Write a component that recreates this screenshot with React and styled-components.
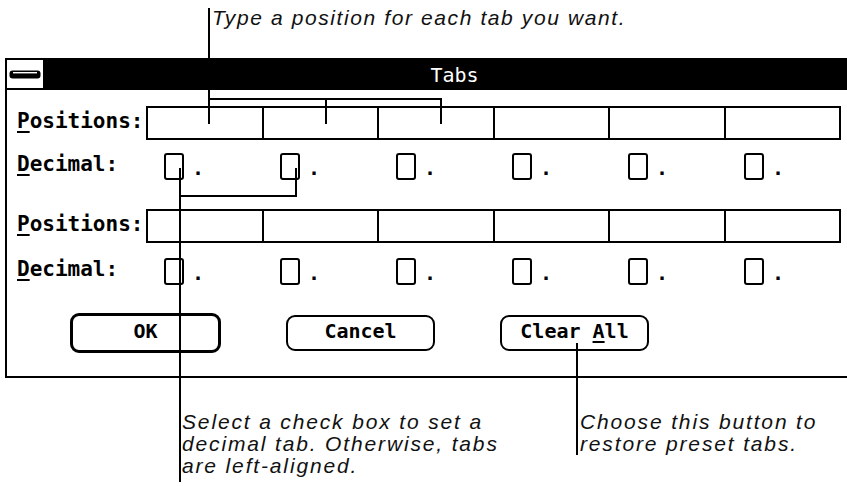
import React from "react";
import styled, { createGlobalStyle } from "styled-components";

const GlobalStyle = createGlobalStyle`
  html, body {
    margin: 0;
    padding: 0;
    background: #fff;
  }
`;

const Page = styled.div`
  position: relative;
  width: 847px;
  height: 486px;
  overflow: hidden;
  background: #fff;
  color: #000;
`;

const Note = styled.div`
  font-family: "Liberation Sans", Arial, sans-serif;
  font-style: italic;
  font-size: 21px;
  line-height: 22px;
  letter-spacing: 1.85px;
  color: #111;
`;

const TopNote = styled(Note)`
  height: 58px;
  box-sizing: border-box;
  padding: 7px 0 0 212px;
  letter-spacing: 1.6px;
`;

const Dialog = styled.div`
  margin-left: 5px;
  width: 857px;
  border: 2px solid #000;
  font-family: "DejaVu Sans Mono", "Liberation Mono", monospace;
  font-weight: bold;
  font-size: 20px;
`;

const TitleBar = styled.div`
  display: flex;
  height: 28px;
  border-bottom: 2px solid #000;
`;

const SysMenu = styled.div`
  width: 36px;
  border-right: 2px solid #000;
  display: flex;
  align-items: center;
  justify-content: center;
  background: #fff;
`;

const Caption = styled.div`
  flex: 1;
  background: #000;
  color: #fff;
  font-weight: normal;
  display: flex;
  align-items: center;
  justify-content: center;
  line-height: 1;
  padding-top: 2px;
`;

const Body = styled.div`
  padding: 16px 0 23px 10px;
  display: flex;
  flex-direction: column;
`;

const Row = styled.div`
  display: flex;
  align-items: center;
  margin-top: ${(p) => p.$gap || 0}px;
  height: ${(p) => p.$h}px;
`;

const Label = styled.div`
  width: 129px;
  flex-shrink: 0;
  font-size: 21px;
  line-height: 1;
  margin-top: -4px;
`;

const Key = styled.span`
  text-decoration: underline;
  text-decoration-thickness: 2px;
  text-underline-offset: 3px;
`;

const Strip = styled.div`
  display: flex;
  width: 695px;
  height: 34px;
  box-sizing: border-box;
  border: 2px solid #000;
`;

const Cell = styled.div`
  flex: 1;
  & + & {
    border-left: 2px solid #000;
  }
`;

const BoxCell = styled.div`
  width: 116px;
  flex-shrink: 0;
  height: 100%;
  display: flex;
  align-items: flex-end;
  padding-left: 18px;
  box-sizing: border-box;
`;

const Check = styled.div`
  width: 20px;
  height: 27px;
  flex-shrink: 0;
  box-sizing: border-box;
  border: 2px solid #000;
  border-radius: 3px;
`;

const Point = styled.span`
  margin-left: 8px;
  line-height: 20px;
  height: 20px;
  margin-bottom: 2px;
`;

const Buttons = styled.div`
  display: flex;
  align-items: center;
  gap: 65px;
  margin: 28px 0 0 53px;
  height: 40px;
`;

const Button = styled.div`
  width: ${(p) => (p.$default ? 151 : 149)}px;
  height: ${(p) => (p.$default ? 40 : 36)}px;
  box-sizing: border-box;
  border: ${(p) => (p.$default ? 3 : 2)}px solid #000;
  border-radius: 9px;
  display: flex;
  align-items: center;
  justify-content: center;
  line-height: 1;
  padding-bottom: 4px;
`;

const Notes = styled.div`
  display: grid;
  grid-template-columns: 398px auto;
  padding: 33px 0 0 182px;
`;

const Leaders = styled.svg`
  position: absolute;
  left: 0;
  top: 0;
  pointer-events: none;
`;

const FieldRow = () => (
  <Strip>
    {[0, 1, 2, 3, 4, 5].map((i) => (
      <Cell key={i} />
    ))}
  </Strip>
);

const DecimalRow = () => (
  <>
    {[0, 1, 2, 3, 4, 5].map((i) => (
      <BoxCell key={i}>
        <Check />
        <Point>.</Point>
      </BoxCell>
    ))}
  </>
);

const Tabs = () => (
  <Dialog>
    <TitleBar>
      <SysMenu>
        <svg width="32" height="9" viewBox="0 0 32 9">
          <rect x="0.5" y="0.5" width="31" height="8" rx="3" fill="#000" />
          <rect x="4" y="2" width="24" height="1.4" fill="#fff" />
        </svg>
      </SysMenu>
      <Caption>Tabs</Caption>
    </TitleBar>
    <Body>
      <Row $h={34}>
        <Label>
          <Key>P</Key>ositions:
        </Label>
        <FieldRow />
      </Row>
      <Row $h={27} $gap={13}>
        <Label>
          <Key>D</Key>ecimal:
        </Label>
        <DecimalRow />
      </Row>
      <Row $h={34} $gap={29}>
        <Label>
          <Key>P</Key>ositions:
        </Label>
        <FieldRow />
      </Row>
      <Row $h={27} $gap={15}>
        <Label>
          <Key>D</Key>ecimal:
        </Label>
        <DecimalRow />
      </Row>
      <Buttons>
        <Button $default>OK</Button>
        <Button>Cancel</Button>
        <Button>
          Clear&nbsp;<Key>A</Key>ll
        </Button>
      </Buttons>
    </Body>
  </Dialog>
);

export default function App() {
  return (
    <Page>
      <GlobalStyle />
      <TopNote>Type a position for each tab you want.</TopNote>
      <Tabs />
      <Notes>
        <Note>
          Select a check box to set a
          <br />
          decimal tab. Otherwise, tabs
          <br />
          are left-aligned.
        </Note>
        <Note>
          Choose this button to
          <br />
          restore preset tabs.
        </Note>
      </Notes>
      <Leaders width="847" height="486" viewBox="0 0 847 486">
        <g stroke="#000" strokeWidth="2" fill="none">
          <path d="M209 8 V124 M209 99 H441 V124 M326 99 V124" />
          <path d="M180 168 V482 M180 196 H296 V168" />
          <path d="M577 343 V455" />
        </g>
      </Leaders>
    </Page>
  );
}
